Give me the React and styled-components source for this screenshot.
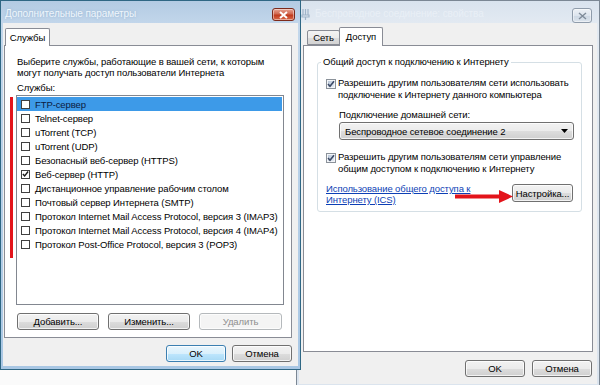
import React from "react";
import styled, { createGlobalStyle } from "styled-components";

const GlobalStyle = createGlobalStyle`
  html, body { margin: 0; padding: 0; background: #fff; }
  body {
    font-family: "Liberation Sans", Arial, sans-serif;
    font-size: 9.5px;
    letter-spacing: -0.1px;
    color: #000;
  }
  * { box-sizing: border-box; }
`;

const Desktop = styled.div`
  position: relative;
  width: 600px;
  height: 385px;
  overflow: hidden;
  background: #fafafa;
`;

const Window = styled.div`
  position: absolute;
  left: ${(p) => p.$x}px;
  top: 0;
  width: ${(p) => p.$w}px;
  height: ${(p) => p.$h}px;
  z-index: ${(p) => (p.$active ? 2 : 1)};
  display: flex;
  flex-direction: column;
  padding: 0 2px 3px 2px;
  border: 1px solid ${(p) => (p.$active ? "#2f6784" : "#7b8794")};
  background: ${(p) =>
    p.$active
      ? "linear-gradient(#b3cbe3, #c3d7eb 24px, #a9c7e4)"
      : "linear-gradient(#d9e3ee, #e3eaf2 24px, #dbe4ee)"};
`;

const TitleBar = styled.div`
  height: 22px;
  flex: none;
  display: flex;
  align-items: flex-start;
  justify-content: space-between;
  padding: 0 ${(p) => p.$right}px 0 2px;
`;

const TitleText = styled.div`
  display: flex;
  align-items: center;
  gap: 5px;
  margin-top: 7px;
  font-size: 10px;
  line-height: 12px;
  color: ${(p) => (p.$active ? "#eef5fb" : "#e9eff6")};
  text-shadow: ${(p) => (p.$active ? "0 0 3px #8fb0d0" : "none")};
  white-space: nowrap;
`;

const CloseButton = styled.div`
  margin-top: 7px;
  width: ${(p) => p.$w}px;
  height: ${(p) => p.$h}px;
  display: flex;
  align-items: center;
  justify-content: center;
  border-radius: 3px;
  border: 1px solid ${(p) => (p.$active ? "#7d2a1b" : "#8f9cab")};
  background: ${(p) =>
    p.$active
      ? "linear-gradient(#e8a493, #d0674f 45%, #c0391c 55%, #d96a4a)"
      : "linear-gradient(#edf1f6, #dde5ee 50%, #cdd8e4 51%, #dbe3ec)"};
  box-shadow: inset 0 0 0 1px rgba(255, 255, 255, 0.45);
`;

const Body = styled.div`
  flex: 1;
  display: flex;
  flex-direction: column;
  background: #f0f0f0;
  min-height: 0;
`;

const TabStrip = styled.div`
  display: flex;
  align-items: flex-end;
  padding: ${(p) => p.$top}px 0 0 ${(p) => p.$left}px;
`;

const Tab = styled.div`
  position: relative;
  z-index: ${(p) => (p.$selected ? 1 : 0)};
  width: ${(p) => p.$w}px;
  height: ${(p) => p.$h}px;
  margin-bottom: ${(p) => (p.$selected ? -1 : 0)}px;
  margin-left: ${(p) => p.$ml || 0}px;
  display: flex;
  align-items: center;
  justify-content: center;
  line-height: 12px;
  border: 1px solid #898c95;
  border-bottom: ${(p) => (p.$selected ? "none" : "1px solid #898c95")};
  border-radius: 2px 2px 0 0;
  background: ${(p) =>
    p.$selected ? "#fff" : "linear-gradient(#f3f3f3, #ebebeb 50%, #dddddd 51%, #d3d3d3)"};
`;

const Panel = styled.div`
  display: flex;
  flex-direction: column;
  height: ${(p) => p.$h}px;
  margin: 0 ${(p) => p.$mr}px 0 ${(p) => p.$ml}px;
  padding: ${(p) => p.$pad};
  border: 1px solid #898c95;
  background: #fff;
`;

const Text = styled.div`
  line-height: ${(p) => p.$lh || 11}px;
  margin: ${(p) => p.$m || "0"};
  white-space: nowrap;
`;

const ListBox = styled.div`
  width: 268px;
  height: 210px;
  margin: 2px 0 0 -1px;
  padding-top: 1px;
  border: 1px solid #828790;
  background: #fff;
`;

const ListRow = styled.div`
  height: 14px;
  display: flex;
  align-items: center;
  gap: 5px;
  padding-left: 4px;
  margin-right: 1px;
  white-space: nowrap;
  color: ${(p) => (p.$selected ? "#0c1a40" : "#000")};
  background: ${(p) => (p.$selected ? "#3d9ae8" : "transparent")};
`;

const ListCheck = styled.span`
  width: 9px;
  height: 9px;
  flex: none;
  display: flex;
  align-items: center;
  justify-content: center;
  border: 1px solid #404040;
  background: #fff;
`;

const AeroCheck = styled.span`
  width: 10px;
  height: 10px;
  flex: none;
  margin-top: 2px;
  display: flex;
  align-items: center;
  justify-content: center;
  border: 1px solid #8b929a;
  background: linear-gradient(135deg, #b3c2d6, #eef2f7);
  box-shadow: inset 0 0 0 1px #f4f6f9;
`;

const ButtonRow = styled.div`
  display: flex;
  gap: ${(p) => p.$gap}px;
  margin: ${(p) => p.$m};
`;

const Button = styled.div`
  width: ${(p) => p.$w}px;
  height: ${(p) => p.$h || 17}px;
  margin-top: ${(p) => p.$mt || 0}px;
  flex: none;
  display: flex;
  align-items: center;
  justify-content: center;
  white-space: nowrap;
  border-radius: 3px;
  color: ${(p) => (p.$disabled ? "#8e8e8e" : "#000")};
  border: 1px solid
    ${(p) => (p.$default ? "#3c7fb1" : p.$disabled ? "#b5b9bc" : "#707070")};
  background: ${(p) =>
    p.$default
      ? "linear-gradient(#eaf6fd, #d9f0fc 50%, #bee6fd 51%, #a7d9f5)"
      : p.$disabled
      ? "#f4f4f4"
      : "linear-gradient(#f2f2f2, #ebebeb 50%, #dddddd 51%, #cfcfcf)"};
  box-shadow: inset 0 0 0 1px rgba(255, 255, 255, 0.75);
`;

const GroupBox = styled.div`
  display: flex;
  flex-direction: column;
  margin: 16px 10px 0 13px;
  padding: 0 8px 6px 8px;
  border: 1px solid #d5dfe5;
  border-radius: 3px;
`;

const GroupTitle = styled.div`
  align-self: flex-start;
  margin: -7px 0 0 -5px;
  padding: 0 2px;
  line-height: 12px;
  background: #fff;
  white-space: nowrap;
`;

const CheckRow = styled.div`
  display: flex;
  align-items: flex-start;
  gap: 2px;
  margin-top: ${(p) => p.$mt}px;
`;

const Select = styled.div`
  width: 235px;
  height: 18px;
  margin: 1px 0 0 13px;
  padding: 0 5px 0 5px;
  display: flex;
  align-items: center;
  justify-content: space-between;
  border: 1px solid #707070;
  border-radius: 3px;
  background: linear-gradient(#f2f2f2, #ebebeb 50%, #dddddd 51%, #cfcfcf);
  box-shadow: inset 0 0 0 1px rgba(255, 255, 255, 0.75);
  white-space: nowrap;
`;

const LinkRow = styled.div`
  display: flex;
  justify-content: space-between;
  align-items: flex-start;
  margin-top: 8px;
`;

const Link = styled.div`
  line-height: 11px;
  color: #0d3fb5;
  text-decoration: underline;
  white-space: nowrap;
`;

const Footer = styled.div`
  display: flex;
  justify-content: flex-end;
  gap: ${(p) => p.$gap}px;
  margin-top: ${(p) => p.$mt}px;
  padding-right: ${(p) => p.$pr}px;
`;

const RedBar = styled.div`
  position: absolute;
  left: 10px;
  top: 97px;
  width: 3px;
  height: 161px;
  background: #e3141b;
  z-index: 3;
`;

const Arrow = styled.svg`
  position: absolute;
  left: 455px;
  top: 189px;
  z-index: 3;
`;

const Tick = ({ color = "#1b1b1b" }) => (
  <svg width="8" height="8" viewBox="0 0 8 8">
    <path d="M1 4 L3 6.2 L7 1.2" fill="none" stroke={color} strokeWidth="1.6" />
  </svg>
);

const services = [
  ["FTP-сервер", false, true],
  ["Telnet-сервер", false],
  ["uTorrent (TCP)", false],
  ["uTorrent (UDP)", false],
  ["Безопасный веб-сервер (HTTPS)", false],
  ["Веб-сервер (HTTP)", true],
  ["Дистанционное управление рабочим столом", false],
  ["Почтовый сервер Интернета (SMTP)", false],
  ["Протокол Internet Mail Access Protocol, версия 3 (IMAP3)", false],
  ["Протокол Internet Mail Access Protocol, версия 4 (IMAP4)", false],
  ["Протокол Post-Office Protocol, версия 3 (POP3)", false],
];

export default function App() {
  return (
    <Desktop>
      <GlobalStyle />

      <Window $x={0} $w={301} $h={370} $active>
        <TitleBar $right={3}>
          <TitleText $active>Дополнительные параметры</TitleText>
          <CloseButton $active $w={23} $h={13}>
            <svg width="9" height="8" viewBox="0 0 9 8">
              <path d="M1 1 L8 7 M8 1 L1 7" stroke="#fff" strokeWidth="2" />
            </svg>
          </CloseButton>
        </TitleBar>
        <Body>
          <TabStrip $top={5} $left={2}>
            <Tab $selected $w={45} $h={18}>Службы</Tab>
          </TabStrip>
          <Panel $h={293} $ml={1} $mr={6} $pad="10px 0 7px 12px">
            <Text>
              Выберите службы, работающие в вашей сети, к которым
              <br />
              могут получать доступ пользователи Интернета
            </Text>
            <Text $m="4px 0 0">Службы:</Text>
            <ListBox>
              {services.map(([name, checked, selected]) => (
                <ListRow key={name} $selected={selected}>
                  <ListCheck>{checked && <Tick />}</ListCheck>
                  {name}
                </ListRow>
              ))}
            </ListBox>
            <ButtonRow $gap={9} $m="8px 0 0">
              <Button $w={82}>Добавить...</Button>
              <Button $w={82}>Изменить...</Button>
              <Button $w={83} $disabled>Удалить</Button>
            </ButtonRow>
          </Panel>
          <Footer $gap={6} $mt={7} $pr={6}>
            <Button $w={60} $default>OK</Button>
            <Button $w={60}>Отмена</Button>
          </Footer>
        </Body>
      </Window>
      <RedBar />

      <Window $x={296} $w={304} $h={388}>
        <TitleBar $right={5}>
          <TitleText>
            <svg width="9" height="11" viewBox="0 0 9 11">
              <path d="M2 0 V6 M4.5 0 V6 M7 0 V6 M1 6 H8 V8 H1 Z M4.5 8 V11" stroke="#9fb3c8" strokeWidth="1.2" fill="none" />
            </svg>
            <span>Беспроводное соединение: свойства</span>
          </TitleText>
          <CloseButton $w={20} $h={15}>
            <svg width="9" height="8" viewBox="0 0 9 8">
              <path d="M1 1 L8 7 M8 1 L1 7" stroke="#7f8c9a" strokeWidth="1.4" fill="none" />
            </svg>
          </CloseButton>
        </TitleBar>
        <Body>
          <TabStrip $top={4} $left={8}>
            <Tab $w={33} $h={15}>Сеть</Tab>
            <Tab $selected $w={44} $h={19} $ml={-1}>Доступ</Tab>
          </TabStrip>
          <Panel $h={307} $ml={4} $mr={4} $pad="0">
            <GroupBox>
              <GroupTitle>Общий доступ к подключению к Интернету</GroupTitle>
              <CheckRow $mt={9}>
                <AeroCheck>
                  <Tick color="#3c4a66" />
                </AeroCheck>
                <Text $lh={12}>
                  Разрешить другим пользователям сети использовать
                  <br />
                  подключение к Интернету данного компьютера
                </Text>
              </CheckRow>
              <Text $lh={12} $m="8px 0 0 13px">Подключение домашней сети:</Text>
              <Select>
                <span>Беспроводное сетевое соединение 2</span>
                <svg width="7" height="4" viewBox="0 0 7 4">
                  <path d="M0 0 H7 L3.5 4 Z" fill="#000" />
                </svg>
              </Select>
              <CheckRow $mt={11}>
                <AeroCheck>
                  <Tick color="#3c4a66" />
                </AeroCheck>
                <Text $lh={12}>
                  Разрешить другим пользователям сети управление
                  <br />
                  общим доступом к подключению к Интернету
                </Text>
              </CheckRow>
              <LinkRow>
                <Link>
                  Использование общего доступа к
                  <br />
                  Интернету (ICS)
                </Link>
                <Button $w={61} $h={18} $mt={1}>Настройка...</Button>
              </LinkRow>
            </GroupBox>
          </Panel>
          <Footer $gap={7} $mt={8} $pr={5}>
            <Button $w={60}>OK</Button>
            <Button $w={60}>Отмена</Button>
          </Footer>
        </Body>
      </Window>

      <Arrow width="58" height="15" viewBox="0 0 58 15">
        <path d="M0 5.5 H44 V1 L58 7.5 L44 14 V9.5 H0 Z" fill="#e3141b" />
      </Arrow>
    </Desktop>
  );
}
